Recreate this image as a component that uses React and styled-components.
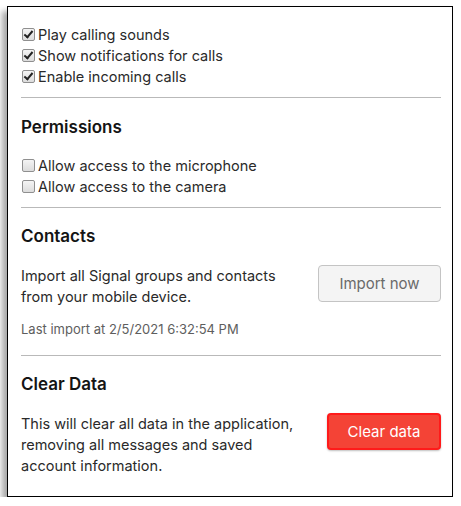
import * as React from 'react';
import styled, { createGlobalStyle } from 'styled-components';

const GlobalStyle = createGlobalStyle`
  body {
    margin: 0;
    background: #ffffff;
    font-family: Inter, "Noto Sans", sans-serif;
    color: #1b1b1b;
  }
`;

const Frame = styled.div`
  box-sizing: border-box;
  width: 446px;
  height: 491px;
  margin: 6px 0 0 7px;
  border: 1px solid #000;
  background: #fff;
  box-shadow: -5px 5px 6px rgba(0, 0, 0, 0.35);
  padding: 17px 11px 0 13px;
  overflow: hidden;
`;

const Divider = styled.hr`
  border: none;
  border-top: 1px solid #b9b9b9;
  margin: ${props => props.gap || 10}px 0 0;
`;

const Heading = styled.h2`
  margin: ${props => props.top || 16}px 0 0;
  font-size: 17px;
  font-weight: 600;
  line-height: 24px;
  color: #141414;
`;

const CheckList = styled.div`
  display: flex;
  flex-direction: column;
  margin-top: ${props => props.top || 0}px;
`;

const CheckRow = styled.label`
  display: flex;
  align-items: center;
  gap: 3px;
  height: 21px;
  font-size: 14.5px;
  line-height: 21px;
  color: #2a2a2a;
`;

const Box = styled.input`
  appearance: none;
  box-sizing: border-box;
  width: 13px;
  height: 13px;
  margin: 0 0 0 1px;
  border: 1px solid #8f8f8f;
  border-radius: 2px;
  background: linear-gradient(#f4f4f4, #dcdcdc);
  position: relative;

  &:checked::after {
    content: '';
    position: absolute;
    left: 3px;
    top: 0px;
    width: 3px;
    height: 7px;
    border: solid #222;
    border-width: 0 2px 2px 0;
    transform: rotate(40deg);
  }
`;

const Row = styled.div`
  display: flex;
  align-items: flex-start;
  justify-content: space-between;
  margin-top: 17px;
`;

const Description = styled.p`
  margin: 0;
  max-width: 290px;
  font-size: 14.5px;
  line-height: 21px;
  color: #2a2a2a;
`;

const Note = styled.div`
  margin-top: 12px;
  font-size: 13px;
  line-height: 20px;
  color: #5e5e5e;
`;

const Button = styled.button`
  box-sizing: border-box;
  flex-shrink: 0;
  white-space: nowrap;
  width: ${props => (props.danger ? 114 : 123)}px;
  height: 37px;
  padding: 0;
  border-radius: 4px;
  font-family: Inter, "Noto Sans", sans-serif;
  font-size: 15px;
  cursor: pointer;
  color: ${props => (props.danger ? '#ffffff' : '#6a6a6a')};
  background: ${props => (props.danger ? '#f44336' : '#f4f4f4')};
  border: ${props => (props.danger ? '2px solid #ff1a1a' : '1px solid #c4c4c4')};
  box-shadow: ${props => (props.danger ? '0 1px 2px rgba(0,0,0,0.25)' : 'none')};
`;

const Check = ({ label, checked }) => (
  <CheckRow>
    <Box type="checkbox" defaultChecked={checked} />
    {label}
  </CheckRow>
);

export default function App() {
  return (
    <>
      <GlobalStyle />
      <Frame>
        <CheckList>
          <Check checked label="Play calling sounds" />
          <Check checked label="Show notifications for calls" />
          <Check checked label="Enable incoming calls" />
        </CheckList>
        <Divider />

        <Heading top={17}>Permissions</Heading>
        <CheckList top={16}>
          <Check label="Allow access to the microphone" />
          <Check label="Allow access to the camera" />
        </CheckList>
        <Divider />

        <Heading>Contacts</Heading>
        <Row>
          <Description>Import all Signal groups and contacts from your mobile device.</Description>
          <Button>Import now</Button>
        </Row>
        <Note>Last import at 2/5/2021 6:32:54 PM</Note>
        <Divider gap={16} />

        <Heading>Clear Data</Heading>
        <Row>
          <Description>
            This will clear all data in the application, removing all messages and saved account information.
          </Description>
          <Button danger>Clear data</Button>
        </Row>
      </Frame>
    </>
  );
}
